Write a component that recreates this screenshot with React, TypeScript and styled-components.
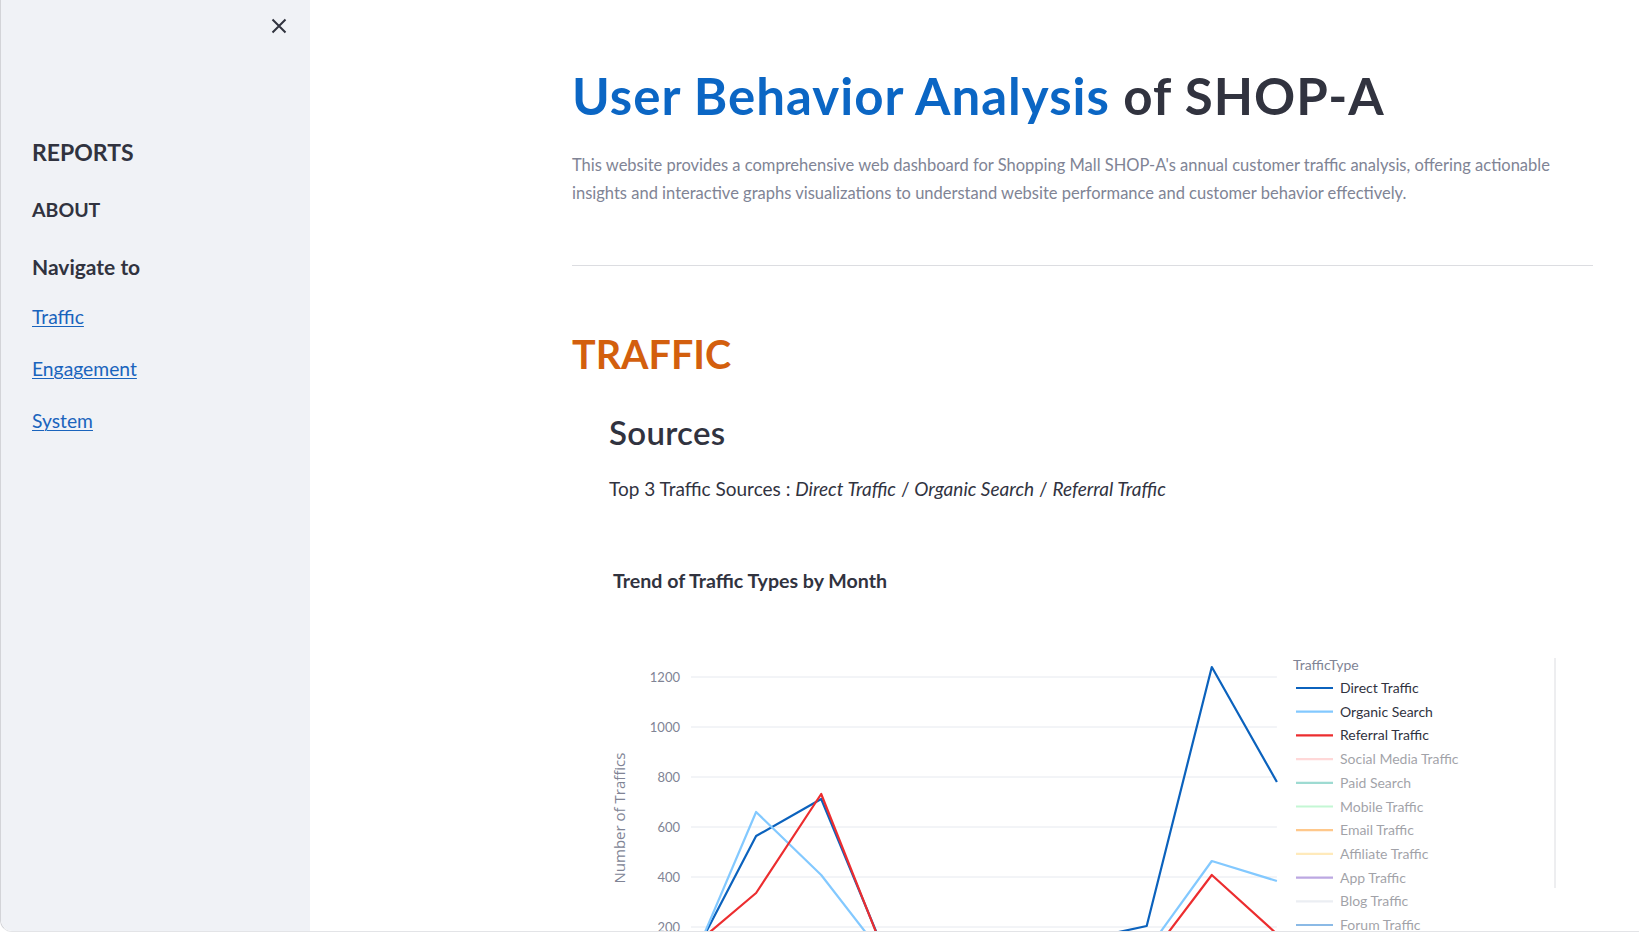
import React from "react";
import styled, { createGlobalStyle } from "styled-components";

const GlobalStyle = createGlobalStyle`
  html, body { margin: 0; padding: 0; background: #ffffff; }
  body { font-family: Lato, "Noto Sans", sans-serif; color: #31333f; }
  * { box-sizing: border-box; }
`;

const Frame = styled.div`
  display: flex;
  height: 100vh;
  overflow: hidden;
  border-left: 1px solid #d3d4d8;
  border-bottom: 1px solid #e3e4e7;
  border-bottom-left-radius: 12px;
`;

const Sidebar = styled.aside`
  flex: 0 0 309px;
  background: #f0f2f6;
  display: flex;
  flex-direction: column;
  padding: 12px 17px 0 31px;
  border-bottom-left-radius: 11px;
`;

const SidebarHeader = styled.div`
  display: flex;
  justify-content: flex-end;
  height: 28px;
`;

const CloseButton = styled.button`
  width: 28px;
  height: 28px;
  border: 0;
  padding: 0;
  background: transparent;
  color: #31333f;
  display: flex;
  align-items: center;
  justify-content: center;
  cursor: pointer;
`;

const Nav = styled.nav`
  display: flex;
  flex-direction: column;
  align-items: flex-start;
  margin-top: 97px;
`;

const NavHeading = styled.div<{ $size: number; $gap: number; $line: number }>`
  margin-top: ${(p) => p.$gap}px;
  font-size: ${(p) => p.$size}px;
  line-height: ${(p) => p.$line}px;
  font-weight: 700;
  color: #31333f;
`;

const NavLink = styled.a<{ $gap: number }>`
  margin-top: ${(p) => p.$gap}px;
  font-size: 19.3px;
  line-height: 24px;
  color: #1a64bd;
  text-decoration: underline;
  text-underline-offset: 2px;
  text-decoration-thickness: 1px;
`;

const Main = styled.main`
  flex: 1;
  min-width: 0;
  padding: 67px 46px 0 262px;
  overflow: hidden;
`;

const Title = styled.h1`
  margin: 0;
  font-size: 51px;
  line-height: 58px;
  font-weight: 700;
  color: #31333f;
  letter-spacing: 1px;
`;

const Accent = styled.span`
  color: #0b66c4;
`;

const Description = styled.p`
  margin: 26px 0 0;
  font-size: 16.5px;
  line-height: 28px;
  color: #808495;
`;

const Divider = styled.hr`
  margin: 58px 0 0;
  border: 0;
  border-top: 1px solid #dcdde1;
`;

const SectionTitle = styled.h2`
  margin: 64px 0 0;
  font-size: 39.5px;
  line-height: 48px;
  font-weight: 700;
  color: #d35f0e;
`;

const SubSection = styled.section`
  padding-left: 37px;
  display: flex;
  flex-direction: column;
`;

const SubTitle = styled.h3`
  margin: 34px 0 0;
  font-size: 33px;
  line-height: 40px;
  font-weight: 600;
  letter-spacing: 0.3px;
  color: #31333f;
`;

const Summary = styled.p`
  margin: 24px 0 0;
  font-size: 19px;
  line-height: 26px;
  color: #31333f;
`;

const ChartTitle = styled.div`
  margin: 66px 0 0 4px;
  font-size: 19.6px;
  line-height: 26px;
  font-weight: 700;
  color: #31333f;
`;

const ChartSvg = styled.svg`
  display: block;
  margin: 26px 0 0 -9px;
  overflow: visible;
`;

const X0 = 91;
const STEP = 65.1;
const yOf = (v: number) => 357 - 0.25 * v;

type Series = { name: string; color: string; active: boolean; values?: number[] };

const series: Series[] = [
  { name: "Direct Traffic", color: "#0b62bd", active: true, values: [64, 564, 712, 84, 120, 110, 148, 204, 1240, 780] },
  { name: "Organic Search", color: "#83c9ff", active: true, values: [48, 660, 408, 72, 90, 80, 100, 104, 464, 384] },
  { name: "Referral Traffic", color: "#ec2d2f", active: true, values: [116, 336, 732, 76, 60, 50, 40, 64, 408, 172] },
  { name: "Social Media Traffic", color: "#ffabab", active: false },
  { name: "Paid Search", color: "#29b09d", active: false },
  { name: "Mobile Traffic", color: "#7defa1", active: false },
  { name: "Email Traffic", color: "#ff8700", active: false },
  { name: "Affiliate Traffic", color: "#ffd16a", active: false },
  { name: "App Traffic", color: "#6d3fc0", active: false },
  { name: "Blog Traffic", color: "#d5dae5", active: false },
  { name: "Forum Traffic", color: "#0068c9", active: false },
];

const ticks = [200, 400, 600, 800, 1000, 1200];

function TrendChart() {
  const plotRight = X0 + STEP * 9;
  return (
    <ChartSvg width={993} height={330} viewBox="0 0 993 330">
      {ticks.map((t) => (
        <g key={t}>
          <line x1={X0} x2={plotRight} y1={yOf(t)} y2={yOf(t)} stroke="#e6e9ef" strokeWidth={1} />
          <text x={80} y={yOf(t) + 4.5} textAnchor="end" fontFamily="Lato, sans-serif" fontSize={13} fill="#808495">
            {t}
          </text>
        </g>
      ))}
      <text
        transform="translate(24.5 198) rotate(-90)"
        textAnchor="middle"
        fontFamily="'Open Sans', sans-serif"
        fontSize={15}
        fill="#808495"
      >
        Number of Traffics
      </text>
      {series
        .filter((s) => s.values)
        .map((s) => (
          <polyline
            key={s.name}
            points={s.values!.map((v, k) => `${X0 + STEP * k},${yOf(v)}`).join(" ")}
            fill="none"
            stroke={s.color}
            strokeWidth={2.2}
            strokeLinejoin="round"
          />
        ))}
      <text x={693} y={50} fontFamily="Lato, sans-serif" fontSize={14} fill="#808495">
        TrafficType
      </text>
      {series.map((s, i) => (
        <g key={s.name} opacity={s.active ? 1 : 0.45}>
          <line x1={696} x2={733} y1={68 + 23.7 * i} y2={68 + 23.7 * i} stroke={s.color} strokeWidth={2.2} />
          <text x={740} y={73 + 23.7 * i} fontFamily="Lato, sans-serif" fontSize={14} fill="#31333f">
            {s.name}
          </text>
        </g>
      ))}
      <line x1={955} x2={955} y1={38} y2={268} stroke="#dcdde1" strokeWidth={1} />
    </ChartSvg>
  );
}

export default function App() {
  return (
    <>
      <GlobalStyle />
      <Frame>
        <Sidebar>
          <SidebarHeader>
            <CloseButton aria-label="Close sidebar">
              <svg width="16" height="16" viewBox="0 0 16 16">
                <path d="M1.5 1.5 L14.5 14.5 M14.5 1.5 L1.5 14.5" stroke="currentColor" strokeWidth="2" strokeLinecap="butt" />
              </svg>
            </CloseButton>
          </SidebarHeader>
          <Nav>
            <NavHeading $size={23} $line={30} $gap={0}>REPORTS</NavHeading>
            <NavHeading $size={19.5} $line={28} $gap={29}>ABOUT</NavHeading>
            <NavHeading $size={21} $line={28} $gap={29}>Navigate to</NavHeading>
            <NavLink href="#traffic" $gap={24}>Traffic</NavLink>
            <NavLink href="#engagement" $gap={28}>Engagement</NavLink>
            <NavLink href="#system" $gap={28}>System</NavLink>
          </Nav>
        </Sidebar>
        <Main>
          <Title>
            <Accent>User Behavior Analysis</Accent> of SHOP-A
          </Title>
          <Description>
            This website provides a comprehensive web dashboard for Shopping Mall SHOP-A's annual customer traffic
            analysis, offering actionable insights and interactive graphs visualizations to understand website
            performance and customer behavior effectively.
          </Description>
          <Divider />
          <SectionTitle id="traffic">TRAFFIC</SectionTitle>
          <SubSection>
            <SubTitle>Sources</SubTitle>
            <Summary>
              Top 3 Traffic Sources : <em>Direct Traffic</em> / <em>Organic Search</em> / <em>Referral Traffic</em>
            </Summary>
            <ChartTitle>Trend of Traffic Types by Month</ChartTitle>
            <TrendChart />
          </SubSection>
        </Main>
      </Frame>
    </>
  );
}
